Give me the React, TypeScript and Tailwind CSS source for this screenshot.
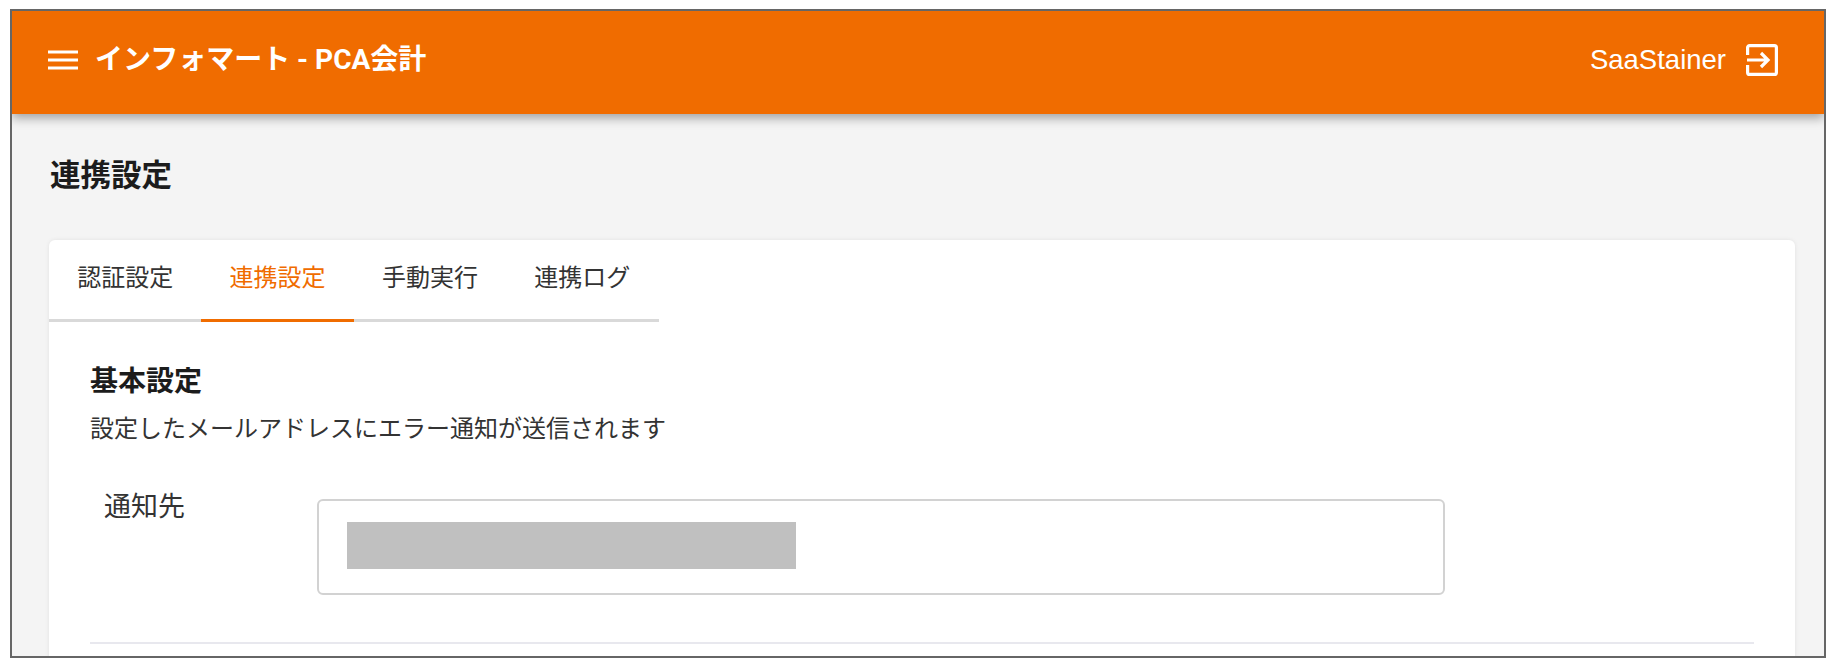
import React from 'react';

const font = "font-['Roboto','Noto_Sans_CJK_JP',sans-serif]";

const tabs = ['認証設定', '連携設定', '手動実行', '連携ログ'];

const MenuIcon = () => (
  <svg width="30" height="20" viewBox="0 0 30 20" fill="none" stroke="white" strokeWidth="3">
    <path d="M0 2h30M0 10h30M0 18h30" />
  </svg>
);

const ExitIcon = () => (
  <svg width="32" height="32" viewBox="0 0 32 32" fill="none" stroke="white" strokeWidth="3.2">
    <path d="M1.600 11V3.600a2 2 0 0 1 2-2h24.800a2 2 0 0 1 2 2v24.800a2 2 0 0 1-2 2H3.600a2 2 0 0 1-2-2V21" />
    <path d="M1 16h20M15 9l7 7-7 7" />
  </svg>
);

export default function App() {
  return (
    <div className={`h-[669px] w-[1831px] overflow-hidden bg-white pt-[9px] pr-[5px] pb-[11px] pl-[10px] ${font}`}>
      <div className="flex h-full flex-col overflow-hidden border-2 border-[#666666] bg-[#f4f4f4]">
        {/* Header */}
        <header className="relative z-10 flex h-[103px] shrink-0 items-center justify-between bg-[#f06c00] pr-[46px] pb-[6px] pl-[36px] text-white shadow-[0_4px_10px_rgba(0,0,0,0.35)]">
          <div className="flex items-center gap-[17px]">
            <MenuIcon />
            <span className="text-[28px] font-bold">インフォマート - PCA会計</span>
          </div>
          <div className="flex items-center gap-[20px]">
            <span className="font-['Liberation_Sans',sans-serif] text-[27.500px]">SaaStainer</span>
            <ExitIcon />
          </div>
        </header>

        {/* Page */}
        <main className="flex-1 pr-[29px] pl-[37px]">
          <h1 className="pt-[42px] pb-[44px] pl-px text-[30.500px] leading-[40px] font-bold text-[#1c1c1c]">連携設定</h1>

          <section className="rounded-[6px] bg-white pb-[40px] shadow-[0_0_4px_rgba(0,0,0,0.08)]">
            <nav className="flex w-[610px] border-b-[3px] border-[#d9d9d9]">
              {tabs.map((tab, i) => (
                <div
                  key={tab}
                  className={
                    i === 1
                      ? '-mb-[3px] shrink-0 border-b-[3px] border-[#f06c00] px-[28.200px] pt-[17px] pb-[19px] text-[24px] leading-[43px] whitespace-nowrap text-[#f06c00]'
                      : 'shrink-0 px-[28.200px] pt-[17px] pb-[19px] text-[24px] leading-[43px] whitespace-nowrap text-[#333333]'
                  }
                >
                  {tab}
                </div>
              ))}
            </nav>

            <div className="px-[41px] pt-[40px]">
              <h2 className="text-[28px] leading-[40px] font-bold text-[#1c1c1c]">基本設定</h2>
              <p className="mt-[7px] text-[24px] leading-[40px] text-[#333333]">
                設定したメールアドレスにエラー通知が送信されます
              </p>

              <div className="mt-[38px] flex pb-[47px] pl-[14px]">
                <label className="w-[213px] shrink-0 text-[27px] leading-[40px] text-[#333333]">通知先</label>
                <div className="mt-[12px] mr-[309px] flex h-[96px] flex-1 items-center rounded-[6px] border-2 border-[#d2d2d2] px-[28px] pb-[4px]">
                  <div className="h-[47px] w-[449px] bg-[#c0c0c0]" />
                </div>
              </div>

              <hr className="border-t-2 border-[#e8e8ee]" />
            </div>
          </section>
        </main>
      </div>
    </div>
  );
}
